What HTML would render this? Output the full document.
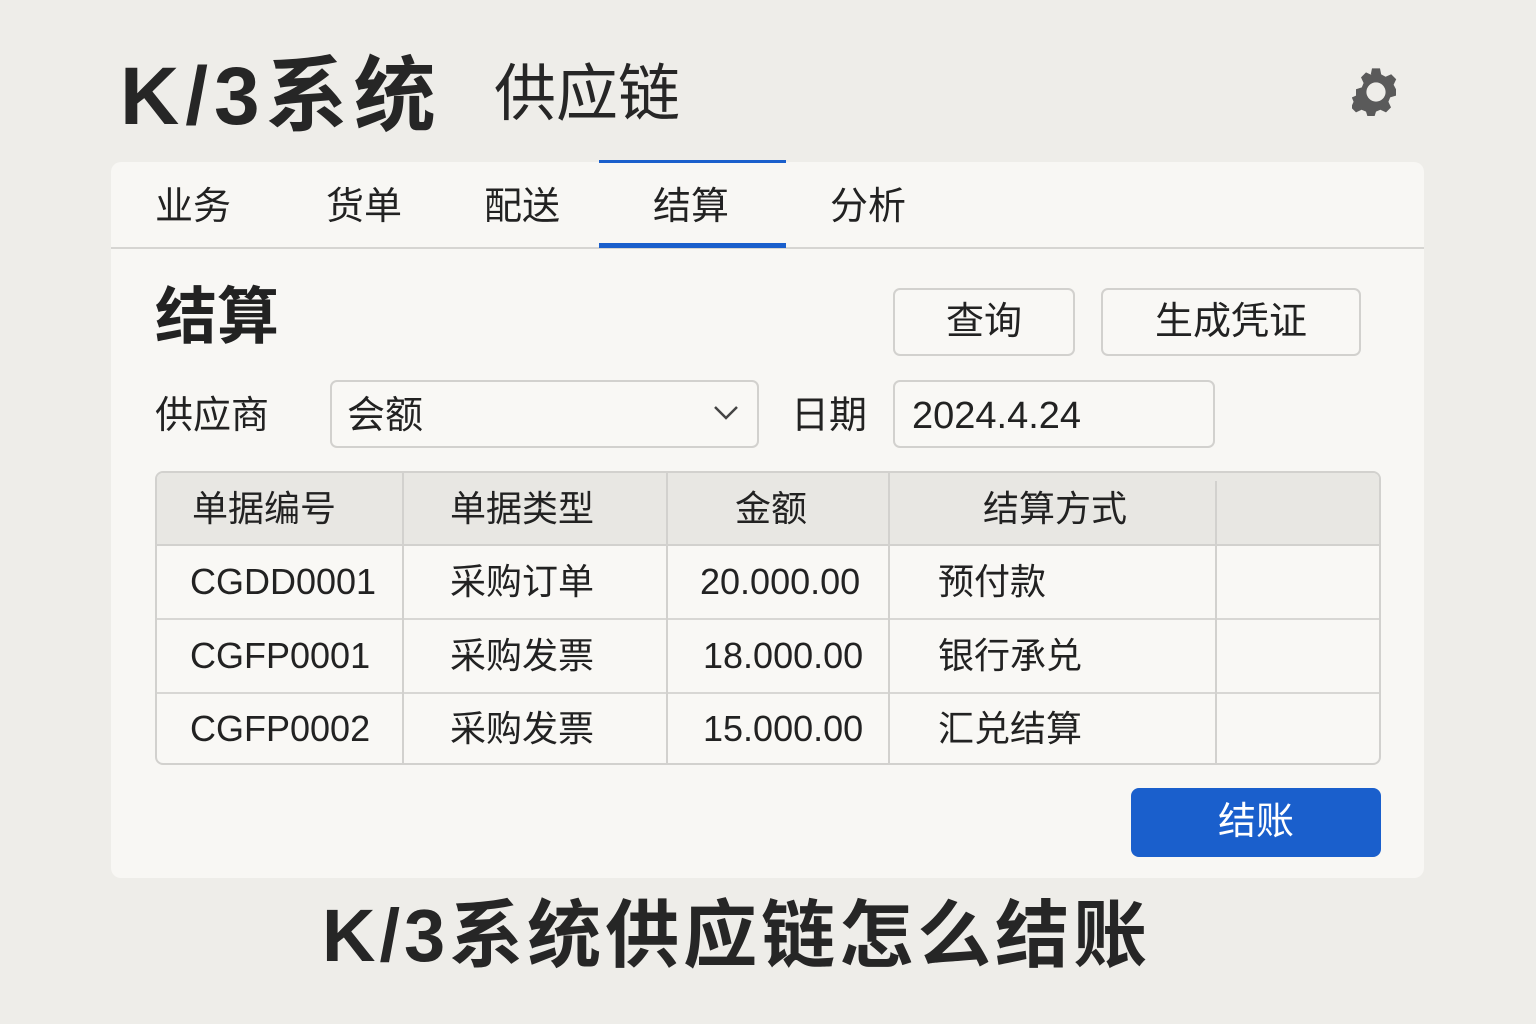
<!DOCTYPE html>
<html><head><meta charset="utf-8"><style>
*{margin:0;padding:0;box-sizing:border-box}
body{width:1536px;height:1024px;background:#eeede9;font-family:"Liberation Sans","Noto Sans CJK SC",sans-serif;color:#222;position:relative;overflow:hidden}
.a{position:absolute;white-space:nowrap}
.card{position:absolute;left:111px;top:162px;width:1313px;height:716px;background:#f8f7f4;border-radius:10px}
.box{position:absolute;border:2px solid #d2d1ce;border-radius:7px;background:#f9f8f5}
.cell{position:absolute;font-size:36px;line-height:36px}
</style></head><body>
<div class="a" style="left:120px;top:52px;font-size:82px;font-weight:bold;line-height:90px;color:#262626;letter-spacing:6px">K/3系统</div>
<div class="a" style="left:494px;top:60px;font-size:62px;line-height:70px;color:#262626">供应链</div>
<svg class="a" style="left:1352px;top:68px" width="48" height="48" viewBox="0 0 24 24"><path fill="#5a5a5a" fill-rule="evenodd" d="M10 1h4l.6 3 2.2 1.2 2.8-1.3 2.5 2.5-1.3 2.8L22 11.4v3.2l-2.9.9-.9 2.2 1.3 2.8-2.5 2.5-2.8-1.3-2.2.9-.9 2.9h-3.200l-.9-2.9-2.2-.9-2.8 1.3-2.5-2.5 1.3-2.8-.9-2.2L2 14.6v-3.2l2.9-.9.9-2.2-1.3-2.8 2.5-2.5 2.8 1.3L9.4 3.9z M12 8a4.8 4.8 0 1 0 0 9.6A4.8 4.8 0 0 0 12 8z" transform="translate(0,-.8)"/></svg>
<div class="card"></div>
<div class="a" style="left:111px;top:247px;width:1313px;height:2px;background:#d6d5d2"></div>
<div class="a" style="left:599px;top:160px;width:187px;height:3px;background:#1a5fcc"></div>
<div class="a" style="left:599px;top:243px;width:187px;height:5px;background:#1a5fcc"></div>
<div class="a" style="left:155px;top:186px;font-size:38px;line-height:42px">业务</div>
<div class="a" style="left:326px;top:186px;font-size:38px;line-height:42px">货单</div>
<div class="a" style="left:484px;top:186px;font-size:38px;line-height:42px">配送</div>
<div class="a" style="left:653px;top:186px;font-size:38px;line-height:42px">结算</div>
<div class="a" style="left:830px;top:186px;font-size:38px;line-height:42px">分析</div>
<div class="a" style="left:155px;top:283px;font-size:62px;font-weight:bold;line-height:70px">结算</div>
<div class="box" style="left:893px;top:288px;width:182px;height:68px"></div>
<div class="a" style="left:893px;top:300px;width:182px;text-align:center;font-size:38px;line-height:44px">查询</div>
<div class="box" style="left:1101px;top:288px;width:260px;height:68px"></div>
<div class="a" style="left:1101px;top:300px;width:260px;text-align:center;font-size:38px;line-height:44px">生成凭证</div>
<div class="a" style="left:155px;top:394px;font-size:38px;line-height:44px">供应商</div>
<div class="box" style="left:330px;top:380px;width:429px;height:68px"></div>
<div class="a" style="left:347px;top:394px;font-size:38px;line-height:44px">会额</div>
<svg class="a" style="left:713px;top:404px" width="26" height="18"><path d="M2 3l11 11 11-11" stroke="#444" stroke-width="2.5" fill="none"/></svg>
<div class="a" style="left:791px;top:394px;font-size:38px;line-height:44px">日期</div>
<div class="box" style="left:893px;top:380px;width:322px;height:68px"></div>
<div class="a" style="left:912px;top:394px;font-size:38px;line-height:44px">2024.4.24</div>
<div class="a" style="left:155px;top:471px;width:1226px;height:294px;border:2px solid #d2d1ce;border-radius:8px;overflow:hidden;background:#f9f8f5">
 <div class="a" style="left:0;top:0;width:1226px;height:72px;background:#e8e7e3"></div>
 <div class="a" style="left:0;top:71px;width:1226px;height:2px;background:#d2d1ce"></div>
 <div class="a" style="left:0;top:145px;width:1226px;height:2px;background:#d8d7d4"></div>
 <div class="a" style="left:0;top:219px;width:1226px;height:2px;background:#d8d7d4"></div>
 <div class="a" style="left:245px;top:0;width:2px;height:294px;background:#d2d1ce"></div>
 <div class="a" style="left:509px;top:0;width:2px;height:294px;background:#d2d1ce"></div>
 <div class="a" style="left:731px;top:0;width:2px;height:294px;background:#d2d1ce"></div>
 <div class="a" style="left:1058px;top:8px;width:2px;height:286px;background:#d2d1ce"></div>
</div>
<div class="cell a" style="left:192px;top:491px">单据编号</div>
<div class="cell a" style="left:450px;top:491px">单据类型</div>
<div class="cell a" style="left:735px;top:491px">金额</div>
<div class="cell a" style="left:983px;top:491px">结算方式</div>
<div class="cell a" style="left:190px;top:564px">CGDD0001</div>
<div class="cell a" style="left:450px;top:564px">采购订单</div>
<div class="cell a" style="left:700px;top:564px">20.000.00</div>
<div class="cell a" style="left:938px;top:564px">预付款</div>
<div class="cell a" style="left:190px;top:638px">CGFP0001</div>
<div class="cell a" style="left:450px;top:638px">采购发票</div>
<div class="cell a" style="left:703px;top:638px">18.000.00</div>
<div class="cell a" style="left:938px;top:638px">银行承兑</div>
<div class="cell a" style="left:190px;top:711px">CGFP0002</div>
<div class="cell a" style="left:450px;top:711px">采购发票</div>
<div class="cell a" style="left:703px;top:711px">15.000.00</div>
<div class="cell a" style="left:938px;top:711px">汇兑结算</div>
<div class="a" style="left:1131px;top:788px;width:250px;height:69px;background:#1a5fcc;border-radius:8px;color:#fff;text-align:center;font-size:38px;line-height:69px">结账</div>
<div class="a" style="left:322px;top:896px;font-size:74px;font-weight:bold;line-height:80px;color:#262626;letter-spacing:4px">K/3系统供应链怎么结账</div>
</body></html>
